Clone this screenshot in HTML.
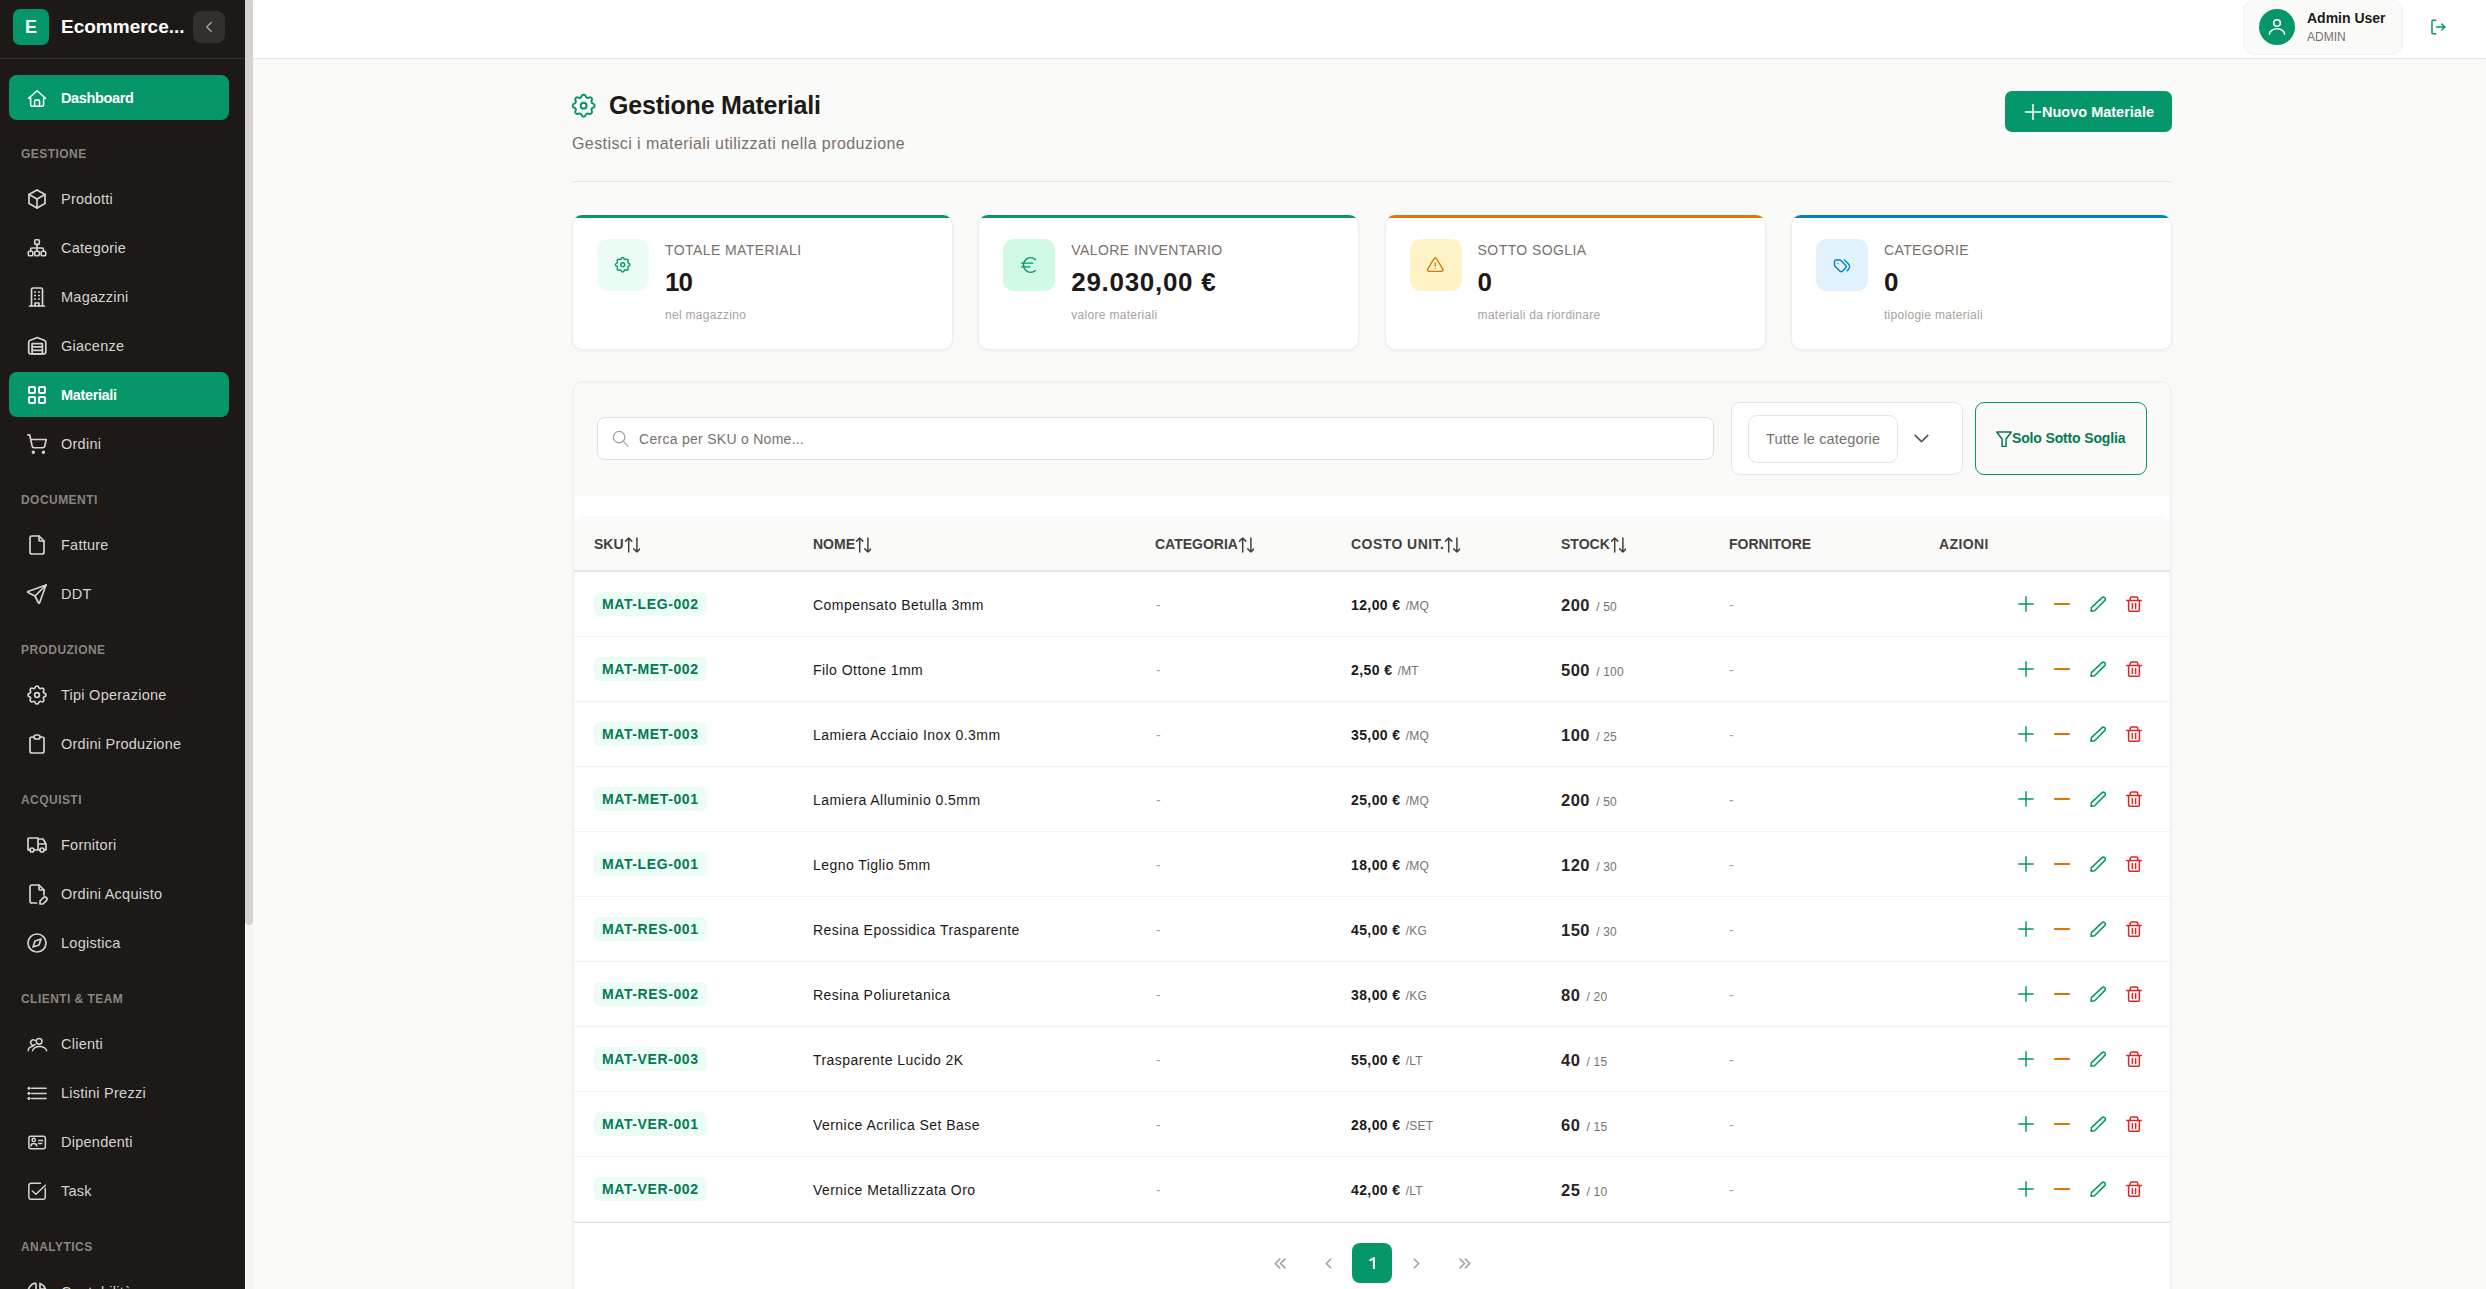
<!DOCTYPE html>
<html lang="it">
<head>
<meta charset="utf-8">
<title>Gestione Materiali</title>
<style>
*{box-sizing:border-box;margin:0;padding:0}
html,body{width:2486px;height:1289px;overflow:hidden;background:#fafaf9;font-family:"Liberation Sans",sans-serif;color:#1c1917}
svg.i{fill:none;stroke:currentColor;stroke-width:2;stroke-linecap:round;stroke-linejoin:round;display:block}
.abs{position:absolute}
/* sidebar */
#sb{position:absolute;left:0;top:0;width:245px;height:1289px;background:#1c1917;overflow:hidden}
#sbtrack{position:absolute;left:245px;top:0;width:8px;height:1289px;background:#f5f5f4;border-left:1px solid #fff}
#sbthumb{position:absolute;left:245px;top:0;width:8px;height:925px;background:#d6d3d1;border-radius:0 0 4px 4px}
.logo{position:absolute;left:13px;top:9px;width:36px;height:36px;border-radius:7px;background:#059669;color:#fff;font-weight:700;font-size:18px;line-height:37px;text-align:center}
.brand{position:absolute;left:61px;top:14px;font-size:19px;font-weight:700;color:#fff;line-height:26px;white-space:nowrap}
.collapse{position:absolute;left:193px;top:11px;width:32px;height:32px;border-radius:8px;background:#31302c;color:#a8a29e}
.sbline{position:absolute;left:0;top:58px;width:245px;height:1px;background:#33312d}
.nav{position:absolute;left:9px;width:220px;height:45px;border-radius:8px;color:#d6d3d1;font-size:14.5px;line-height:45px;letter-spacing:.25px}
.nav.on{background:#059669;color:#fff;font-weight:700;letter-spacing:-.35px}
.nav svg{position:absolute;left:16px;top:10.5px;width:24px;height:24px;stroke-width:1.7}
.nav span{position:absolute;left:52px;top:1px;white-space:nowrap}
.sec{position:absolute;left:21px;margin-top:.5px;font-size:12px;letter-spacing:.45px;color:#8a847f;font-weight:700;line-height:16px}
/* topbar */
#top{position:absolute;left:253px;top:0;width:2233px;height:59px;background:#fff;border-bottom:1px solid #e7e5e4;box-shadow:0 1px 3px rgba(0,0,0,.025)}

/* user chip */
.chip{position:absolute;left:2243px;top:-1px;width:160px;height:56px;border-radius:12px;background:#fafaf9;border:1px solid #f3f2f1}
.avatar{position:absolute;left:2259px;top:9px;width:36px;height:36px;border-radius:50%;background:#059669;color:#fff}
.uname{position:absolute;left:2307px;top:9px;font-size:14px;font-weight:700;color:#1c1917;line-height:18px;white-space:nowrap}
.urole{position:absolute;left:2307px;top:30px;font-size:12px;color:#78716c;line-height:14px}
/* page header */
.ptitle{position:absolute;left:609px;top:90px;font-size:25px;letter-spacing:-.2px;font-weight:700;line-height:30px;color:#1c1917;white-space:nowrap}
.psub{position:absolute;left:572px;top:134px;font-size:16px;letter-spacing:.42px;line-height:20px;color:#78716c;white-space:nowrap}
.pdiv{position:absolute;left:572px;top:181px;width:1600px;height:1px;background:#e7e5e4}
.btn-new{position:absolute;left:2005px;top:91px;width:167px;height:41px;border-radius:7px;background:#059669;color:#fff;font-size:14.5px;font-weight:700;line-height:41px}
/* stat cards */
.card{position:absolute;top:215px;width:381px;height:135px;background:#fff;border-radius:10px;box-shadow:0 0 0 1px #eeedec inset,0 1px 3px rgba(0,0,0,.06);overflow:hidden}
.card .bar{position:absolute;left:0;top:0;right:0;height:3px}
.cicon{position:absolute;left:25px;top:24px;width:52px;height:52px;border-radius:11px}
.clabel{position:absolute;left:93px;top:27px;font-size:14px;line-height:16px;letter-spacing:.42px;color:#78716c;white-space:nowrap}
.cval{position:absolute;left:93px;top:51.5px;font-size:26px;letter-spacing:.7px;font-weight:700;line-height:30px;color:#1c1917;white-space:nowrap}
.csub{position:absolute;left:93px;top:93px;font-size:12px;letter-spacing:.3px;line-height:14px;color:#a8a29e;white-space:nowrap}
/* panel */
.panel{position:absolute;left:572px;top:381px;width:1600px;height:1000px;background:#fff;border-radius:10px;border:2px solid #f3f2f1}
.filter{position:absolute;left:0;top:0;width:1596px;height:113px;background:#fafaf9;border-radius:9px 9px 0 0}
.search{position:absolute;left:597px;top:417px;width:1117px;height:43px;border-radius:8px;border:1px solid #e2e0de;background:#fff}
.search .ph{position:absolute;left:41px;top:1px;line-height:41px;font-size:14px;letter-spacing:.28px;color:#78716c}
.selwrap{position:absolute;left:1731px;top:402px;width:232px;height:73px;border-radius:9px;border:1px solid #e7e5e4;background:#fff}
.selin{position:absolute;left:16px;top:12px;width:150px;height:48px;border-radius:9px;border:1px solid #e7e5e4;color:#78716c;font-size:14.5px;letter-spacing:.15px;line-height:46px;padding-left:17px;white-space:nowrap}
.btn-soglia{position:absolute;left:1975px;top:402px;width:172px;height:73px;border-radius:9px;border:1.5px solid #059669;background:#fafaf9;color:#047857;font-size:14px;letter-spacing:-.15px;font-weight:700;line-height:70px;white-space:nowrap}
/* table */
.thead{position:absolute;left:574px;top:516px;width:1596px;height:56px;background:#fafaf9;border-radius:10px 10px 0 0;border-bottom:2px solid #e7e5e4}
.th{position:absolute;top:1px;line-height:55px;font-size:14px;font-weight:700;color:#44403c;letter-spacing:0;white-space:nowrap}
.row{position:absolute;left:574px;width:1596px;height:65px;border-bottom:1px solid #f3f2f1}
.tfoot{position:absolute;left:574px;top:1222px;width:1596px;height:1px;background:#e2e0de}
.sku{position:absolute;left:20px;top:20px;height:24px;padding:0 8px;border-radius:6px;background:#ecfdf5;color:#047857;font-size:14px;letter-spacing:.6px;font-weight:700;line-height:23px;padding-top:1px;white-space:nowrap}
.td{position:absolute;top:1px;line-height:64px;font-size:14px;white-space:nowrap}
.muted{color:#a8a29e}
.small{font-size:12px;color:#78716c;font-weight:400;letter-spacing:.2px;margin-left:1px}
.act svg{position:absolute;top:24px;width:16px;height:16px}
.pg{position:absolute;top:1243px;width:40px;height:40px;border-radius:8px;color:#a8a29e}
</style>
</head>
<body>
<div id="sb">
  <div class="logo">E</div>
  <div class="brand">Ecommerce...</div>
  <div class="collapse"><svg class="i" viewBox="0 0 24 24" style="position:absolute;left:7px;top:7px;width:18px;height:18px;stroke-width:1.8"><path d="m15 18-6-6 6-6"/></svg></div>
  <div class="sbline"></div>
<div class="nav on" style="top:75.0px"><svg class="i" viewBox="0 0 24 24" style="left:16px;top:10.5px;width:24px;height:24px;stroke-width:1.5"><path d="M5.6 12.3H3.6l8.5-7.5l8.5 7.5h-2"/><path d="M5.6 12.3v6.4a1.5 1.5 0 0 0 1.5 1.5h10a1.5 1.5 0 0 0 1.5-1.5v-6.4"/><path d="M9.6 20.2v-4.8a1.3 1.3 0 0 1 1.3-1.3h2.4a1.3 1.3 0 0 1 1.3 1.3v4.8"/></svg><span>Dashboard</span></div>
<div class="sec" style="top:145.6px">GESTIONE</div>
<div class="nav" style="top:176.0px"><svg class="i" viewBox="0 0 24 24" style=""><path d="M12 3l8 4.5l0 9l-8 4.5l-8 -4.5l0 -9l8 -4.5"/><path d="M12 12l8 -4.5"/><path d="M12 12l0 9"/><path d="M12 12l-8 -4.5"/></svg><span>Prodotti</span></div>
<div class="nav" style="top:225.0px"><svg class="i" viewBox="0 0 24 24" style="left:17px;top:11.5px;width:22px;height:22px;stroke-width:1.8"><rect x="9.5" y="3" width="5" height="5" rx="1"/><path d="M12 8v4M5 15.5v-2a1.5 1.5 0 0 1 1.5 -1.5h11a1.5 1.5 0 0 1 1.5 1.5v2M12 12v3.5"/><rect x="2.5" y="15.5" width="5" height="5" rx="1.5"/><rect x="9.5" y="15.5" width="5" height="5" rx="1.5"/><rect x="16.5" y="15.5" width="5" height="5" rx="1.5"/></svg><span>Categorie</span></div>
<div class="nav" style="top:274.0px"><svg class="i" viewBox="0 0 24 24" style=""><path d="M4.5 21h15"/><path d="M6.5 21V4.5a1.5 1.5 0 0 1 1.5 -1.5h8a1.5 1.5 0 0 1 1.5 1.5V21"/><path d="M10 21v-3h4v3"/><path d="M9.7 7h.6M13.7 7h.6M9.7 10.5h.6M13.7 10.5h.6M9.7 14h.6M13.7 14h.6"/></svg><span>Magazzini</span></div>
<div class="nav" style="top:323.0px"><svg class="i" viewBox="0 0 24 24" style="left:17.75px;top:12.25px;width:20.5px;height:20.5px;stroke-width:2"><path d="M22 8.35V20a2 2 0 0 1-2 2H4a2 2 0 0 1-2-2V8.35A2 2 0 0 1 3.26 6.5l8-3.2a2 2 0 0 1 1.48 0l8 3.2A2 2 0 0 1 22 8.35Z"/><path d="M6 18h12"/><path d="M6 14h12"/><rect width="12" height="12" x="6" y="10"/></svg><span>Giacenze</span></div>
<div class="nav on" style="top:372.0px"><svg class="i" viewBox="0 0 24 24" style="stroke-width:2"><path d="M4 4m0 1a1 1 0 0 1 1 -1h4a1 1 0 0 1 1 1v4a1 1 0 0 1 -1 1h-4a1 1 0 0 1 -1 -1z"/><path d="M14 4m0 1a1 1 0 0 1 1 -1h4a1 1 0 0 1 1 1v4a1 1 0 0 1 -1 1h-4a1 1 0 0 1 -1 -1z"/><path d="M4 14m0 1a1 1 0 0 1 1 -1h4a1 1 0 0 1 1 1v4a1 1 0 0 1 -1 1h-4a1 1 0 0 1 -1 -1z"/><path d="M14 14m0 1a1 1 0 0 1 1 -1h4a1 1 0 0 1 1 1v4a1 1 0 0 1 -1 1h-4a1 1 0 0 1 -1 -1z"/></svg><span>Materiali</span></div>
<div class="nav" style="top:421.0px"><svg class="i" viewBox="0 0 24 24" style="left:17px;top:11.5px;width:22px;height:22px;stroke-width:1.8"><circle cx="8" cy="21" r="1"/><circle cx="19" cy="21" r="1"/><path d="M2.05 2.05h2l2.66 12.42a2 2 0 0 0 2 1.58h9.78a2 2 0 0 0 1.95-1.57l1.65-7.43H5.12"/></svg><span>Ordini</span></div>
<div class="sec" style="top:491.5px">DOCUMENTI</div>
<div class="nav" style="top:522.0px"><svg class="i" viewBox="0 0 24 24" style=""><path d="M14 3v4a1 1 0 0 0 1 1h4"/><path d="M17 21h-10a2 2 0 0 1 -2 -2v-14a2 2 0 0 1 2 -2h7l5 5v11a2 2 0 0 1 -2 2z"/></svg><span>Fatture</span></div>
<div class="nav" style="top:571.0px"><svg class="i" viewBox="0 0 24 24" style=""><path d="M10 14l11 -11"/><path d="M21 3l-6.5 18a.55 .55 0 0 1 -1 0l-3.5 -7l-7 -3.5a.55 .55 0 0 1 0 -1l18 -6.5"/></svg><span>DDT</span></div>
<div class="sec" style="top:641.5px">PRODUZIONE</div>
<div class="nav" style="top:672.0px"><svg class="i" viewBox="0 0 24 24" style=""><path d="M10.325 4.317c.426 -1.756 2.924 -1.756 3.35 0a1.724 1.724 0 0 0 2.573 1.066c1.543 -.94 3.31 .826 2.37 2.37a1.724 1.724 0 0 0 1.065 2.572c1.756 .426 1.756 2.924 0 3.35a1.724 1.724 0 0 0 -1.066 2.573c.94 1.543 -.826 3.31 -2.37 2.37a1.724 1.724 0 0 0 -2.572 1.065c-.426 1.756 -2.924 1.756 -3.35 0a1.724 1.724 0 0 0 -2.573 -1.066c-1.543 .94 -3.31 -.826 -2.37 -2.37a1.724 1.724 0 0 0 -1.065 -2.572c-1.756 -.426 -1.756 -2.924 0 -3.35a1.724 1.724 0 0 0 1.066 -2.573c-.94 -1.543 .826 -3.31 2.37 -2.37c1 .608 2.296 .07 2.572 -1.065z"/><circle cx="12" cy="12" r="2.4"/></svg><span>Tipi Operazione</span></div>
<div class="nav" style="top:721.0px"><svg class="i" viewBox="0 0 24 24" style=""><path d="M9 5h-2a2 2 0 0 0 -2 2v12a2 2 0 0 0 2 2h10a2 2 0 0 0 2 -2v-12a2 2 0 0 0 -2 -2h-2"/><path d="M9 3m0 2a2 2 0 0 1 2 -2h2a2 2 0 0 1 2 2v0a2 2 0 0 1 -2 2h-2a2 2 0 0 1 -2 -2z"/></svg><span>Ordini Produzione</span></div>
<div class="sec" style="top:791.5px">ACQUISTI</div>
<div class="nav" style="top:822.0px"><svg class="i" viewBox="0 0 24 24" style=""><path d="M7 17m-2 0a2 2 0 1 0 4 0a2 2 0 1 0 -4 0"/><path d="M17 17m-2 0a2 2 0 1 0 4 0a2 2 0 1 0 -4 0"/><path d="M5 17h-2v-11a1 1 0 0 1 1 -1h9v12m-4 0h6m4 0h2v-6h-8m0 -5h5l3 5"/></svg><span>Fornitori</span></div>
<div class="nav" style="top:871.0px"><svg class="i" viewBox="0 0 24 24" style=""><path d="M14 3v4a1 1 0 0 0 1 1h4"/><path d="M11.5 21h-4.5a2 2 0 0 1 -2 -2v-14a2 2 0 0 1 2 -2h7l5 5v5"/><path d="M18.42 15.61a2.1 2.1 0 0 1 2.97 2.97l-3.39 3.42h-3v-3l3.42 -3.39z"/></svg><span>Ordini Acquisto</span></div>
<div class="nav" style="top:920.0px"><svg class="i" viewBox="0 0 24 24" style=""><path d="M8 16l2 -6l6 -2l-2 6l-6 2"/><path d="M12 12m-9 0a9 9 0 1 0 18 0a9 9 0 1 0 -18 0"/></svg><span>Logistica</span></div>
<div class="sec" style="top:990.5px">CLIENTI &amp; TEAM</div>
<div class="nav" style="top:1021.0px"><svg class="i" viewBox="0 0 24 24" style="left:16px;top:10.5px;width:24px;height:24px;stroke-width:1.5"><circle cx="14.1" cy="9.3" r="2.9"/><path d="M7.6 18.8a7 4.2 0 0 1 14 0"/><path d="M9.9 8.3a2.7 2.7 0 1 0 .2 4.3"/><path d="M3.2 18.8a5.8 4.6 0 0 1 4.6 -4.5"/></svg><span>Clienti</span></div>
<div class="nav" style="top:1070.0px"><svg class="i" viewBox="0 0 24 24" style="left:16px;top:10.5px;width:24px;height:24px;stroke-width:1.5"><path d="M6.6 7.3h14.5M6.6 12.4h14.5M6.6 17.5h14.5"/><circle cx="3.9" cy="7.3" r="1.1" fill="currentColor" stroke-width="1"/><circle cx="3.9" cy="12.4" r="1.1" fill="currentColor" stroke-width="1"/><circle cx="3.9" cy="17.5" r="1.1" fill="currentColor" stroke-width="1"/></svg><span>Listini Prezzi</span></div>
<div class="nav" style="top:1119.0px"><svg class="i" viewBox="0 0 24 24" style="left:16px;top:10.5px;width:24px;height:24px;stroke-width:1.5"><rect x="3.85" y="6.35" width="16.5" height="12.3" rx="2"/><circle cx="8.7" cy="9.9" r="1.6"/><path d="M5.9 15.9a2.9 2.5 0 0 1 5.8 0"/><path d="M13.6 10.6h4M13.6 13.5h3.2"/></svg><span>Dipendenti</span></div>
<div class="nav" style="top:1168.0px"><svg class="i" viewBox="0 0 24 24" style="left:16px;top:10.5px;width:24px;height:24px;stroke-width:1.5"><path d="M15.5 4.25H6a2.1 2.1 0 0 0 -2.15 2.1V18.2a2.1 2.1 0 0 0 2.1 2.15H18.1a2.1 2.1 0 0 0 2.15 -2.1V9.5"/><path d="M7.3 12l3.5 3.2l9.7 -9"/></svg><span>Task</span></div>
<div class="sec" style="top:1238.5px">ANALYTICS</div>
<div class="nav" style="top:1269.0px"><svg class="i" viewBox="0 0 24 24" style=""><path d="M10 3.2a9 9 0 1 0 10.8 10.8a1 1 0 0 0 -1 -1h-6.8a2 2 0 0 1 -2 -2v-7a.9 .9 0 0 0 -1 -.8"/><path d="M15 3.5a9 9 0 0 1 5.5 5.5h-4.5a1 1 0 0 1 -1 -1v-4.5"/></svg><span>Contabilità</span></div>
</div>
<div id="sbtrack"></div><div id="sbthumb"></div>
<div id="top"></div>

<div class="chip"></div>
<div class="avatar"><svg class="i" viewBox="0 0 36 36" style="position:absolute;left:0;top:0;width:36px;height:36px;stroke-width:1.6"><circle cx="18" cy="14" r="3.3"/><path d="M10.4 25.2a7.6 5.4 0 0 1 15.2 0"/></svg></div>
<div class="uname">Admin User</div>
<div class="urole">ADMIN</div>
<svg class="i" viewBox="0 0 24 24" style="position:absolute;left:2429px;top:18px;width:18px;height:18px;color:#059669"><path d="M9 3H5a1 1 0 0 0-1 1v16a1 1 0 0 0 1 1h4"/><path d="M10 12h11"/><path d="m17 8 4 4-4 4"/></svg>

<svg class="i" viewBox="0 0 24 24" style="position:absolute;left:569.3px;top:90.8px;width:29.3px;height:29.3px;stroke-width:1.64;color:#059669"><path d="M10.325 4.317c.426 -1.756 2.924 -1.756 3.35 0a1.724 1.724 0 0 0 2.573 1.066c1.543 -.94 3.31 .826 2.37 2.37a1.724 1.724 0 0 0 1.065 2.572c1.756 .426 1.756 2.924 0 3.35a1.724 1.724 0 0 0 -1.066 2.573c.94 1.543 -.826 3.31 -2.37 2.37a1.724 1.724 0 0 0 -2.572 1.065c-.426 1.756 -2.924 1.756 -3.35 0a1.724 1.724 0 0 0 -2.573 -1.066c-1.543 .94 -3.31 -.826 -2.37 -2.37a1.724 1.724 0 0 0 -1.065 -2.572c-1.756 -.426 -1.756 -2.924 0 -3.35a1.724 1.724 0 0 0 1.066 -2.573c-.94 -1.543 .826 -3.31 2.37 -2.37c1 .608 2.296 .07 2.572 -1.065z"/><circle cx="12" cy="12" r="2.4"/></svg>
<div class="ptitle">Gestione Materiali</div>
<div class="psub">Gestisci i materiali utilizzati nella produzione</div>
<div class="btn-new"><svg class="i" viewBox="0 0 24 24" style="position:absolute;left:15px;top:8px;width:26px;height:26px;stroke-width:1.4"><path d="M12 5l0 14"/><path d="M5 12l14 0"/></svg><span style="position:absolute;left:37px;top:1px">Nuovo Materiale</span></div>
<div class="pdiv"></div>

<div class="card" style="left:572.0px"><div class="bar" style="background:#059669"></div><div class="cicon" style="background:#ecfdf5;color:#059669"><svg class="i" viewBox="0 0 24 24" style="position:absolute;left:16.30px;top:16.30px;width:19.4px;height:19.4px;stroke-width:1.75"><path d="M10.325 4.317c.426 -1.756 2.924 -1.756 3.35 0a1.724 1.724 0 0 0 2.573 1.066c1.543 -.94 3.31 .826 2.37 2.37a1.724 1.724 0 0 0 1.065 2.572c1.756 .426 1.756 2.924 0 3.35a1.724 1.724 0 0 0 -1.066 2.573c.94 1.543 -.826 3.31 -2.37 2.37a1.724 1.724 0 0 0 -2.572 1.065c-.426 1.756 -2.924 1.756 -3.35 0a1.724 1.724 0 0 0 -2.573 -1.066c-1.543 .94 -3.31 -.826 -2.37 -2.37a1.724 1.724 0 0 0 -1.065 -2.572c-1.756 -.426 -1.756 -2.924 0 -3.35a1.724 1.724 0 0 0 1.066 -2.573c-.94 -1.543 .826 -3.31 2.37 -2.37c1 .608 2.296 .07 2.572 -1.065z"/><circle cx="12" cy="12" r="2.4"/></svg></div><div class="clabel">TOTALE MATERIALI</div><div class="cval" style="letter-spacing:-1px">10</div><div class="csub">nel magazzino</div></div>
<div class="card" style="left:978.3px"><div class="bar" style="background:#059669"></div><div class="cicon" style="background:#d1fae5;color:#059669"><svg class="i" viewBox="0 0 24 24" style="position:absolute;left:15.00px;top:15.00px;width:22px;height:22px;stroke-width:1.5"><path d="M4 10h12"/><path d="M4 14h9"/><path d="M19 6a7.7 7.7 0 0 0-5.2-2A7.9 7.9 0 0 0 6 12c0 4.4 3.5 8 7.8 8 2 0 3.8-.8 5.2-2"/></svg></div><div class="clabel">VALORE INVENTARIO</div><div class="cval">29.030,00 €</div><div class="csub">valore materiali</div></div>
<div class="card" style="left:1384.6px"><div class="bar" style="background:#d97706"></div><div class="cicon" style="background:#fef3c7;color:#d97706"><svg class="i" viewBox="0 0 24 24" style="position:absolute;left:16.75px;top:16.75px;width:18.5px;height:18.5px;stroke-width:1.8"><path d="M12 9v4"/><path d="M10.363 3.591l-8.106 13.534a1.914 1.914 0 0 0 1.636 2.871h16.214a1.914 1.914 0 0 0 1.636 -2.87l-8.106 -13.536a1.914 1.914 0 0 0 -3.274 0z"/><path d="M12 16h.01"/></svg></div><div class="clabel">SOTTO SOGLIA</div><div class="cval">0</div><div class="csub">materiali da riordinare</div></div>
<div class="card" style="left:1790.9px"><div class="bar" style="background:#0284c7"></div><div class="cicon" style="background:#e0f2fe;color:#0284c7"><svg class="i" viewBox="0 0 24 24" style="position:absolute;left:16.00px;top:15.50px;width:20px;height:20px;stroke-width:1.7"><path d="M3 8v4.172a2 2 0 0 0 .586 1.414l5.71 5.71a2.41 2.41 0 0 0 3.408 0l3.592 -3.592a2.41 2.41 0 0 0 0 -3.408l-5.71 -5.71a2 2 0 0 0 -1.414 -.586h-4.172a2 2 0 0 0 -2 2z"/><path d="M18 19l1.592 -1.592a4.82 4.82 0 0 0 0 -6.816l-4.592 -4.592"/><path d="M7 10h-.01"/></svg></div><div class="clabel">CATEGORIE</div><div class="cval">0</div><div class="csub">tipologie materiali</div></div>

<div class="panel"><div class="filter"></div></div>
<div class="search"><svg class="i" viewBox="0 0 24 24" style="position:absolute;left:13.25px;top:11.25px;width:19.5px;height:19.5px;color:#a8a29e;stroke-width:1.5"><path d="M10 10m-7 0a7 7 0 1 0 14 0a7 7 0 1 0 -14 0"/><path d="M21 21l-6 -6"/></svg><span class="ph">Cerca per SKU o Nome...</span></div>
<div class="selwrap"><div class="selin">Tutte le categorie</div><svg class="i" viewBox="0 0 24 24" style="position:absolute;left:177px;top:23.3px;width:25px;height:25px;color:#57534e;stroke-width:1.5"><path d="M6 9l6 6l6 -6"/></svg></div>
<div class="btn-soglia"><svg class="i" viewBox="0 0 16 16" style="position:absolute;left:19.5px;top:27.5px;width:16px;height:16px;stroke-width:1.5"><path d="M0.75 1h14.5L10.1 8v7.4H6.1V8Z"/></svg><span style="position:absolute;left:36px">Solo Sotto Soglia</span></div>

<div class="thead"><div class="th" style="left:20px;letter-spacing:0">SKU<svg class="i" viewBox="0 0 16 16" style="display:inline-block;vertical-align:-4px;width:16px;height:16px;stroke-width:1.5;margin-left:0px"><path d="M4.7 1v14M1.6 4.1 4.7 1l3.1 3.1M12.9 1v14M9.8 11.9l3.1 3.1 3.1-3.1"/></svg></div><div class="th" style="left:239px;letter-spacing:0">NOME<svg class="i" viewBox="0 0 16 16" style="display:inline-block;vertical-align:-4px;width:16px;height:16px;stroke-width:1.5;margin-left:0px"><path d="M4.7 1v14M1.6 4.1 4.7 1l3.1 3.1M12.9 1v14M9.8 11.9l3.1 3.1 3.1-3.1"/></svg></div><div class="th" style="left:581px;letter-spacing:0">CATEGORIA<svg class="i" viewBox="0 0 16 16" style="display:inline-block;vertical-align:-4px;width:16px;height:16px;stroke-width:1.5;margin-left:0px"><path d="M4.7 1v14M1.6 4.1 4.7 1l3.1 3.1M12.9 1v14M9.8 11.9l3.1 3.1 3.1-3.1"/></svg></div><div class="th" style="left:777px;letter-spacing:.45px">COSTO UNIT.<svg class="i" viewBox="0 0 16 16" style="display:inline-block;vertical-align:-4px;width:16px;height:16px;stroke-width:1.5;margin-left:0px"><path d="M4.7 1v14M1.6 4.1 4.7 1l3.1 3.1M12.9 1v14M9.8 11.9l3.1 3.1 3.1-3.1"/></svg></div><div class="th" style="left:987px;letter-spacing:0">STOCK<svg class="i" viewBox="0 0 16 16" style="display:inline-block;vertical-align:-4px;width:16px;height:16px;stroke-width:1.5;margin-left:0px"><path d="M4.7 1v14M1.6 4.1 4.7 1l3.1 3.1M12.9 1v14M9.8 11.9l3.1 3.1 3.1-3.1"/></svg></div><div class="th" style="left:1155px;letter-spacing:0">FORNITORE</div><div class="th" style="left:1365px;letter-spacing:.4px">AZIONI</div></div>
<div class="row" style="top:572px"><div class="sku">MAT-LEG-002</div><div class="td" style="left:239px;color:#1c1917;letter-spacing:.45px">Compensato Betulla 3mm</div><div class="td muted" style="left:582px">-</div><div class="td" style="left:777px;font-weight:700;color:#1c1917;letter-spacing:.4px">12,00 € <span class="small">/MQ</span></div><div class="td" style="left:987px;font-weight:700;color:#292524;font-size:16.5px;letter-spacing:.5px">200 <span class="small">/ 50</span></div><div class="td muted" style="left:1155px">-</div><div class="act"><svg class="i" viewBox="0 0 16 16" style="left:1444px;color:#059669;stroke-width:1.45"><path d="M0.8 8h14.4M8 0.8v14.4"/></svg><svg class="i" viewBox="0 0 16 16" style="left:1480px;color:#d97706;stroke-width:1.9"><path d="M0.8 8h14.4"/></svg><svg class="i" viewBox="0 0 16 16" style="left:1516px;color:#059669;stroke-width:1.5"><path d="M12.1 1.6a2 2 0 0 1 2.8 2.8L4.6 14.7 1 15.2 1.4 11.6Z"/></svg><svg class="i" viewBox="0 0 16 16" style="left:1552px;color:#dc2626;stroke-width:1.5"><path d="M0.75 4.6H15.25M2.6 4.6v9.4c0 .8.6 1.3 1.3 1.3h8.2c.7 0 1.3-.6 1.3-1.3V4.6M4.2 4.6V2.6c0-.8.6-1.6 1.5-1.6h4.6c.9 0 1.5.8 1.5 1.6v2M6.4 7.6v4.8M9.6 7.6v4.8"/></svg></div></div>
<div class="row" style="top:637px"><div class="sku">MAT-MET-002</div><div class="td" style="left:239px;color:#1c1917;letter-spacing:.45px">Filo Ottone 1mm</div><div class="td muted" style="left:582px">-</div><div class="td" style="left:777px;font-weight:700;color:#1c1917;letter-spacing:.4px">2,50 € <span class="small">/MT</span></div><div class="td" style="left:987px;font-weight:700;color:#292524;font-size:16.5px;letter-spacing:.5px">500 <span class="small">/ 100</span></div><div class="td muted" style="left:1155px">-</div><div class="act"><svg class="i" viewBox="0 0 16 16" style="left:1444px;color:#059669;stroke-width:1.45"><path d="M0.8 8h14.4M8 0.8v14.4"/></svg><svg class="i" viewBox="0 0 16 16" style="left:1480px;color:#d97706;stroke-width:1.9"><path d="M0.8 8h14.4"/></svg><svg class="i" viewBox="0 0 16 16" style="left:1516px;color:#059669;stroke-width:1.5"><path d="M12.1 1.6a2 2 0 0 1 2.8 2.8L4.6 14.7 1 15.2 1.4 11.6Z"/></svg><svg class="i" viewBox="0 0 16 16" style="left:1552px;color:#dc2626;stroke-width:1.5"><path d="M0.75 4.6H15.25M2.6 4.6v9.4c0 .8.6 1.3 1.3 1.3h8.2c.7 0 1.3-.6 1.3-1.3V4.6M4.2 4.6V2.6c0-.8.6-1.6 1.5-1.6h4.6c.9 0 1.5.8 1.5 1.6v2M6.4 7.6v4.8M9.6 7.6v4.8"/></svg></div></div>
<div class="row" style="top:702px"><div class="sku">MAT-MET-003</div><div class="td" style="left:239px;color:#1c1917;letter-spacing:.45px">Lamiera Acciaio Inox 0.3mm</div><div class="td muted" style="left:582px">-</div><div class="td" style="left:777px;font-weight:700;color:#1c1917;letter-spacing:.4px">35,00 € <span class="small">/MQ</span></div><div class="td" style="left:987px;font-weight:700;color:#292524;font-size:16.5px;letter-spacing:.5px">100 <span class="small">/ 25</span></div><div class="td muted" style="left:1155px">-</div><div class="act"><svg class="i" viewBox="0 0 16 16" style="left:1444px;color:#059669;stroke-width:1.45"><path d="M0.8 8h14.4M8 0.8v14.4"/></svg><svg class="i" viewBox="0 0 16 16" style="left:1480px;color:#d97706;stroke-width:1.9"><path d="M0.8 8h14.4"/></svg><svg class="i" viewBox="0 0 16 16" style="left:1516px;color:#059669;stroke-width:1.5"><path d="M12.1 1.6a2 2 0 0 1 2.8 2.8L4.6 14.7 1 15.2 1.4 11.6Z"/></svg><svg class="i" viewBox="0 0 16 16" style="left:1552px;color:#dc2626;stroke-width:1.5"><path d="M0.75 4.6H15.25M2.6 4.6v9.4c0 .8.6 1.3 1.3 1.3h8.2c.7 0 1.3-.6 1.3-1.3V4.6M4.2 4.6V2.6c0-.8.6-1.6 1.5-1.6h4.6c.9 0 1.5.8 1.5 1.6v2M6.4 7.6v4.8M9.6 7.6v4.8"/></svg></div></div>
<div class="row" style="top:767px"><div class="sku">MAT-MET-001</div><div class="td" style="left:239px;color:#1c1917;letter-spacing:.45px">Lamiera Alluminio 0.5mm</div><div class="td muted" style="left:582px">-</div><div class="td" style="left:777px;font-weight:700;color:#1c1917;letter-spacing:.4px">25,00 € <span class="small">/MQ</span></div><div class="td" style="left:987px;font-weight:700;color:#292524;font-size:16.5px;letter-spacing:.5px">200 <span class="small">/ 50</span></div><div class="td muted" style="left:1155px">-</div><div class="act"><svg class="i" viewBox="0 0 16 16" style="left:1444px;color:#059669;stroke-width:1.45"><path d="M0.8 8h14.4M8 0.8v14.4"/></svg><svg class="i" viewBox="0 0 16 16" style="left:1480px;color:#d97706;stroke-width:1.9"><path d="M0.8 8h14.4"/></svg><svg class="i" viewBox="0 0 16 16" style="left:1516px;color:#059669;stroke-width:1.5"><path d="M12.1 1.6a2 2 0 0 1 2.8 2.8L4.6 14.7 1 15.2 1.4 11.6Z"/></svg><svg class="i" viewBox="0 0 16 16" style="left:1552px;color:#dc2626;stroke-width:1.5"><path d="M0.75 4.6H15.25M2.6 4.6v9.4c0 .8.6 1.3 1.3 1.3h8.2c.7 0 1.3-.6 1.3-1.3V4.6M4.2 4.6V2.6c0-.8.6-1.6 1.5-1.6h4.6c.9 0 1.5.8 1.5 1.6v2M6.4 7.6v4.8M9.6 7.6v4.8"/></svg></div></div>
<div class="row" style="top:832px"><div class="sku">MAT-LEG-001</div><div class="td" style="left:239px;color:#1c1917;letter-spacing:.45px">Legno Tiglio 5mm</div><div class="td muted" style="left:582px">-</div><div class="td" style="left:777px;font-weight:700;color:#1c1917;letter-spacing:.4px">18,00 € <span class="small">/MQ</span></div><div class="td" style="left:987px;font-weight:700;color:#292524;font-size:16.5px;letter-spacing:.5px">120 <span class="small">/ 30</span></div><div class="td muted" style="left:1155px">-</div><div class="act"><svg class="i" viewBox="0 0 16 16" style="left:1444px;color:#059669;stroke-width:1.45"><path d="M0.8 8h14.4M8 0.8v14.4"/></svg><svg class="i" viewBox="0 0 16 16" style="left:1480px;color:#d97706;stroke-width:1.9"><path d="M0.8 8h14.4"/></svg><svg class="i" viewBox="0 0 16 16" style="left:1516px;color:#059669;stroke-width:1.5"><path d="M12.1 1.6a2 2 0 0 1 2.8 2.8L4.6 14.7 1 15.2 1.4 11.6Z"/></svg><svg class="i" viewBox="0 0 16 16" style="left:1552px;color:#dc2626;stroke-width:1.5"><path d="M0.75 4.6H15.25M2.6 4.6v9.4c0 .8.6 1.3 1.3 1.3h8.2c.7 0 1.3-.6 1.3-1.3V4.6M4.2 4.6V2.6c0-.8.6-1.6 1.5-1.6h4.6c.9 0 1.5.8 1.5 1.6v2M6.4 7.6v4.8M9.6 7.6v4.8"/></svg></div></div>
<div class="row" style="top:897px"><div class="sku">MAT-RES-001</div><div class="td" style="left:239px;color:#1c1917;letter-spacing:.45px">Resina Epossidica Trasparente</div><div class="td muted" style="left:582px">-</div><div class="td" style="left:777px;font-weight:700;color:#1c1917;letter-spacing:.4px">45,00 € <span class="small">/KG</span></div><div class="td" style="left:987px;font-weight:700;color:#292524;font-size:16.5px;letter-spacing:.5px">150 <span class="small">/ 30</span></div><div class="td muted" style="left:1155px">-</div><div class="act"><svg class="i" viewBox="0 0 16 16" style="left:1444px;color:#059669;stroke-width:1.45"><path d="M0.8 8h14.4M8 0.8v14.4"/></svg><svg class="i" viewBox="0 0 16 16" style="left:1480px;color:#d97706;stroke-width:1.9"><path d="M0.8 8h14.4"/></svg><svg class="i" viewBox="0 0 16 16" style="left:1516px;color:#059669;stroke-width:1.5"><path d="M12.1 1.6a2 2 0 0 1 2.8 2.8L4.6 14.7 1 15.2 1.4 11.6Z"/></svg><svg class="i" viewBox="0 0 16 16" style="left:1552px;color:#dc2626;stroke-width:1.5"><path d="M0.75 4.6H15.25M2.6 4.6v9.4c0 .8.6 1.3 1.3 1.3h8.2c.7 0 1.3-.6 1.3-1.3V4.6M4.2 4.6V2.6c0-.8.6-1.6 1.5-1.6h4.6c.9 0 1.5.8 1.5 1.6v2M6.4 7.6v4.8M9.6 7.6v4.8"/></svg></div></div>
<div class="row" style="top:962px"><div class="sku">MAT-RES-002</div><div class="td" style="left:239px;color:#1c1917;letter-spacing:.45px">Resina Poliuretanica</div><div class="td muted" style="left:582px">-</div><div class="td" style="left:777px;font-weight:700;color:#1c1917;letter-spacing:.4px">38,00 € <span class="small">/KG</span></div><div class="td" style="left:987px;font-weight:700;color:#292524;font-size:16.5px;letter-spacing:.5px">80 <span class="small">/ 20</span></div><div class="td muted" style="left:1155px">-</div><div class="act"><svg class="i" viewBox="0 0 16 16" style="left:1444px;color:#059669;stroke-width:1.45"><path d="M0.8 8h14.4M8 0.8v14.4"/></svg><svg class="i" viewBox="0 0 16 16" style="left:1480px;color:#d97706;stroke-width:1.9"><path d="M0.8 8h14.4"/></svg><svg class="i" viewBox="0 0 16 16" style="left:1516px;color:#059669;stroke-width:1.5"><path d="M12.1 1.6a2 2 0 0 1 2.8 2.8L4.6 14.7 1 15.2 1.4 11.6Z"/></svg><svg class="i" viewBox="0 0 16 16" style="left:1552px;color:#dc2626;stroke-width:1.5"><path d="M0.75 4.6H15.25M2.6 4.6v9.4c0 .8.6 1.3 1.3 1.3h8.2c.7 0 1.3-.6 1.3-1.3V4.6M4.2 4.6V2.6c0-.8.6-1.6 1.5-1.6h4.6c.9 0 1.5.8 1.5 1.6v2M6.4 7.6v4.8M9.6 7.6v4.8"/></svg></div></div>
<div class="row" style="top:1027px"><div class="sku">MAT-VER-003</div><div class="td" style="left:239px;color:#1c1917;letter-spacing:.45px">Trasparente Lucido 2K</div><div class="td muted" style="left:582px">-</div><div class="td" style="left:777px;font-weight:700;color:#1c1917;letter-spacing:.4px">55,00 € <span class="small">/LT</span></div><div class="td" style="left:987px;font-weight:700;color:#292524;font-size:16.5px;letter-spacing:.5px">40 <span class="small">/ 15</span></div><div class="td muted" style="left:1155px">-</div><div class="act"><svg class="i" viewBox="0 0 16 16" style="left:1444px;color:#059669;stroke-width:1.45"><path d="M0.8 8h14.4M8 0.8v14.4"/></svg><svg class="i" viewBox="0 0 16 16" style="left:1480px;color:#d97706;stroke-width:1.9"><path d="M0.8 8h14.4"/></svg><svg class="i" viewBox="0 0 16 16" style="left:1516px;color:#059669;stroke-width:1.5"><path d="M12.1 1.6a2 2 0 0 1 2.8 2.8L4.6 14.7 1 15.2 1.4 11.6Z"/></svg><svg class="i" viewBox="0 0 16 16" style="left:1552px;color:#dc2626;stroke-width:1.5"><path d="M0.75 4.6H15.25M2.6 4.6v9.4c0 .8.6 1.3 1.3 1.3h8.2c.7 0 1.3-.6 1.3-1.3V4.6M4.2 4.6V2.6c0-.8.6-1.6 1.5-1.6h4.6c.9 0 1.5.8 1.5 1.6v2M6.4 7.6v4.8M9.6 7.6v4.8"/></svg></div></div>
<div class="row" style="top:1092px"><div class="sku">MAT-VER-001</div><div class="td" style="left:239px;color:#1c1917;letter-spacing:.45px">Vernice Acrilica Set Base</div><div class="td muted" style="left:582px">-</div><div class="td" style="left:777px;font-weight:700;color:#1c1917;letter-spacing:.4px">28,00 € <span class="small">/SET</span></div><div class="td" style="left:987px;font-weight:700;color:#292524;font-size:16.5px;letter-spacing:.5px">60 <span class="small">/ 15</span></div><div class="td muted" style="left:1155px">-</div><div class="act"><svg class="i" viewBox="0 0 16 16" style="left:1444px;color:#059669;stroke-width:1.45"><path d="M0.8 8h14.4M8 0.8v14.4"/></svg><svg class="i" viewBox="0 0 16 16" style="left:1480px;color:#d97706;stroke-width:1.9"><path d="M0.8 8h14.4"/></svg><svg class="i" viewBox="0 0 16 16" style="left:1516px;color:#059669;stroke-width:1.5"><path d="M12.1 1.6a2 2 0 0 1 2.8 2.8L4.6 14.7 1 15.2 1.4 11.6Z"/></svg><svg class="i" viewBox="0 0 16 16" style="left:1552px;color:#dc2626;stroke-width:1.5"><path d="M0.75 4.6H15.25M2.6 4.6v9.4c0 .8.6 1.3 1.3 1.3h8.2c.7 0 1.3-.6 1.3-1.3V4.6M4.2 4.6V2.6c0-.8.6-1.6 1.5-1.6h4.6c.9 0 1.5.8 1.5 1.6v2M6.4 7.6v4.8M9.6 7.6v4.8"/></svg></div></div>
<div class="row" style="top:1157px"><div class="sku">MAT-VER-002</div><div class="td" style="left:239px;color:#1c1917;letter-spacing:.45px">Vernice Metallizzata Oro</div><div class="td muted" style="left:582px">-</div><div class="td" style="left:777px;font-weight:700;color:#1c1917;letter-spacing:.4px">42,00 € <span class="small">/LT</span></div><div class="td" style="left:987px;font-weight:700;color:#292524;font-size:16.5px;letter-spacing:.5px">25 <span class="small">/ 10</span></div><div class="td muted" style="left:1155px">-</div><div class="act"><svg class="i" viewBox="0 0 16 16" style="left:1444px;color:#059669;stroke-width:1.45"><path d="M0.8 8h14.4M8 0.8v14.4"/></svg><svg class="i" viewBox="0 0 16 16" style="left:1480px;color:#d97706;stroke-width:1.9"><path d="M0.8 8h14.4"/></svg><svg class="i" viewBox="0 0 16 16" style="left:1516px;color:#059669;stroke-width:1.5"><path d="M12.1 1.6a2 2 0 0 1 2.8 2.8L4.6 14.7 1 15.2 1.4 11.6Z"/></svg><svg class="i" viewBox="0 0 16 16" style="left:1552px;color:#dc2626;stroke-width:1.5"><path d="M0.75 4.6H15.25M2.6 4.6v9.4c0 .8.6 1.3 1.3 1.3h8.2c.7 0 1.3-.6 1.3-1.3V4.6M4.2 4.6V2.6c0-.8.6-1.6 1.5-1.6h4.6c.9 0 1.5.8 1.5 1.6v2M6.4 7.6v4.8M9.6 7.6v4.8"/></svg></div></div>
<svg class="i" viewBox="0 0 24 24" style="position:absolute;left:1269.5px;top:1252.5px;width:21px;height:21px;stroke-width:1.94;color:#a8a29e"><path d="M11 7l-5 5l5 5"/><path d="M17 7l-5 5l5 5"/></svg>
<svg class="i" viewBox="0 0 24 24" style="position:absolute;left:1319.5px;top:1254.5px;width:17px;height:17px;stroke-width:2.40;color:#a8a29e"><path d="M15 6l-6 6l6 6"/></svg>
<svg class="i" viewBox="0 0 24 24" style="position:absolute;left:1453.5px;top:1252.5px;width:21px;height:21px;stroke-width:1.94;color:#a8a29e"><path d="M7 7l5 5l-5 5"/><path d="M13 7l5 5l-5 5"/></svg>
<svg class="i" viewBox="0 0 24 24" style="position:absolute;left:1407.5px;top:1254.5px;width:17px;height:17px;stroke-width:2.40;color:#a8a29e"><path d="M9 6l6 6l-6 6"/></svg>
<div class="pg" style="left:1352px;background:#059669;color:#fff"><svg viewBox="0 0 8 12" style="position:absolute;left:16.5px;top:14px;width:8px;height:12px;fill:none;stroke:#fff;stroke-width:2;stroke-linejoin:round"><path d="M1.3 3.2Q3.6 2.2 4.9 1.1" stroke-linecap="round"/><path d="M4.9 1V12"/></svg></div>
<div class="tfoot"></div>

</body>
</html>
